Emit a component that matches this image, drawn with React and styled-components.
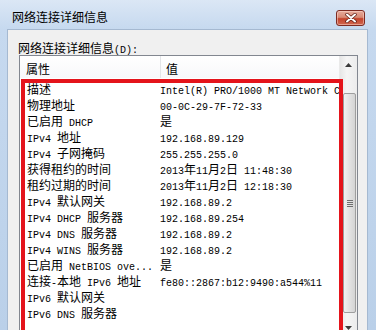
import styled, { createGlobalStyle } from 'styled-components'

const GlobalStyle = createGlobalStyle`
  html, body { margin: 0; padding: 0; }
  body {
    width: 376px;
    height: 330px;
    overflow: hidden;
    background: #bcd2ea;
    font-family: "Noto Sans CJK SC", sans-serif;
  }
`

const rows = [
  ['描述', 'Intel(R) PRO/1000 MT Network Connection'],
  ['物理地址', '00-0C-29-7F-72-33'],
  ['已启用 DHCP', '是'],
  ['IPv4 地址', '192.168.89.129'],
  ['IPv4 子网掩码', '255.255.255.0'],
  ['获得租约的时间', '2013年11月2日 11:48:30'],
  ['租约过期的时间', '2013年11月2日 12:18:30'],
  ['IPv4 默认网关', '192.168.89.2'],
  ['IPv4 DHCP 服务器', '192.168.89.254'],
  ['IPv4 DNS 服务器', '192.168.89.2'],
  ['IPv4 WINS 服务器', '192.168.89.2'],
  ['已启用 NetBIOS ove...', '是'],
  ['连接-本地 IPv6 地址', 'fe80::2867:b12:9490:a544%11'],
  ['IPv6 默认网关', ''],
  ['IPv6 DNS 服务器', ''],
]

// window chrome
const Window = styled.div`
  width: 376px;
  height: 330px;
  display: flex;
  flex-direction: column;
  background: linear-gradient(#dbe7f5 0px, #c6d9ef 29px, #bad0e9 100%);
  overflow: hidden;
`

const TitleBar = styled.div`
  height: 29px;
  box-sizing: border-box;
  padding: 5px 11px 0 12px;
  display: flex;
  align-items: center;
  justify-content: space-between;
  flex-shrink: 0;
`

const Title = styled.span`
  font-size: 12px;
  line-height: 14px;
  color: #000;
`

const CloseBtn = styled.div`
  width: 29px;
  height: 16px;
  margin-top: 1px;
  box-sizing: border-box;
  border: 1px solid #7d2b22;
  border-radius: 3px;
  background: linear-gradient(#e6ab9c 0%, #d88a75 45%, #c4432c 55%, #d0684f 100%);
  display: flex;
  align-items: center;
  justify-content: center;
  box-shadow: inset 0 0 0 1px rgba(255, 220, 210, 0.5);
`

const Panel = styled.div`
  flex: 1;
  margin: 0 8px 0 7px;
  background: #f0f0f0;
  border: 1px solid #a5b9d1;
  border-bottom: none;
  padding: 10px 9px 0 10px;
  overflow: hidden;
`

const FieldLabel = styled.div`
  font-size: 12px;
  line-height: 14px;
  height: 14px;
  color: #000;
`

const ListBox = styled.div`
  position: relative;
  margin-top: 1px;
  margin-left: 1px;
  height: 282px;
  box-sizing: border-box;
  border: 1px solid #828790;
  background: #fff;
  display: flex;
`

const ListMain = styled.div`
  flex: 1;
  min-width: 0;
  overflow: hidden;
  display: flex;
  flex-direction: column;
`

const Header = styled.div`
  height: 22px;
  flex-shrink: 0;
  display: flex;
  background: linear-gradient(#ffffff, #f7f8fa);
`

const HeadCell = styled.div`
  width: ${p => p.$width || 'auto'};
  flex: ${p => (p.$width ? 'none' : 1)};
  padding-left: ${p => p.$pad}px;
  padding-top: 3px;
  font-size: 12px;
  line-height: 19px;
  color: #000;
  border-right: ${p => (p.$sep ? '1px solid #e3e5e8' : 'none')};
`

const Rows = styled.div`
  padding-top: 1px;
`

const Row = styled.div`
  display: grid;
  grid-template-columns: 133px max-content;
  padding-left: 7px;
  height: 16px;
  line-height: 16px;
  white-space: nowrap;
  color: #000;
`

const Cell = styled.div`
  white-space: nowrap;
`

const Han = styled.span`
  font-family: "Noto Sans CJK SC", sans-serif;
  font-size: 12px;
  line-height: 16px;
`

const Lat = styled.span`
  font-family: "Liberation Mono", monospace;
  font-size: 10px;
  line-height: 16px;
  white-space: pre;
`

// scrollbar
const ScrollBar = styled.div`
  width: 17px;
  flex-shrink: 0;
  display: flex;
  flex-direction: column;
  background: linear-gradient(90deg, #e6e6e6, #f5f5f5 40%, #ececec);
  border-left: 1px solid #eaeaea;
`

const ArrowBtn = styled.div`
  height: 17px;
  display: flex;
  align-items: center;
  justify-content: center;
  flex-shrink: 0;
`

const Track = styled.div`
  flex: 1;
  padding-top: 20px;
`

const Thumb = styled.div`
  height: 220px;
  margin: 0 1px 0 3px;
  box-sizing: border-box;
  border: 1px solid #9e9e9e;
  border-radius: 2px;
  background: linear-gradient(90deg, #f2f2f2, #e2e2e2 50%, #d4d4d4);
  display: flex;
  flex-direction: column;
  align-items: center;
  justify-content: center;
  gap: 1px;
`

const Grip = styled.div`
  width: 6px;
  height: 1px;
  background: #6f6f6f;
`

// the red annotation box drawn over the rows
const Highlight = styled.div`
  position: absolute;
  left: 1px;
  top: 23px;
  width: 322px;
  height: 300px;
  box-sizing: border-box;
  border: 4px solid #e4141b;
  pointer-events: none;
`

const CJK = /([\u3000-\u9fff\uff00-\uffef]+)/

const Mixed = ({ text }) =>
  text
    .split(CJK)
    .filter(Boolean)
    .map((part, i) =>
      CJK.test(part) ? <Han key={i}>{part}</Han> : <Lat key={i}>{part}</Lat>
    )

const Arrow = ({ up }) => (
  <svg width="7" height="4" viewBox="0 0 7 4">
    <polygon points={up ? '3.5,0 7,4 0,4' : '0,0 7,0 3.5,4'} fill="#3a3a3a" />
  </svg>
)

export default function App() {
  return (
    <>
      <GlobalStyle />
      <Window>
        <TitleBar>
          <Title>网络连接详细信息</Title>
          <CloseBtn>
            <svg width="12" height="10" viewBox="0 0 12 10">
              <path d="M2 1.5 L10 8.5 M10 1.5 L2 8.5" stroke="#5a1a12" strokeWidth="3.4" strokeLinecap="round" />
              <path d="M2 1.5 L10 8.5 M10 1.5 L2 8.5" stroke="#fff" strokeWidth="2" strokeLinecap="round" />
            </svg>
          </CloseBtn>
        </TitleBar>
        <Panel>
          <FieldLabel>
            <Mixed text="网络连接详细信息(D):" />
          </FieldLabel>
          <ListBox>
            <ListMain>
              <Header>
                <HeadCell $width="134px" $pad={6} $sep>属性</HeadCell>
                <HeadCell $pad={5}>值</HeadCell>
              </Header>
              <Rows>
                {rows.map(([k, v]) => (
                  <Row key={k}>
                    <Cell><Mixed text={k} /></Cell>
                    <Cell><Mixed text={v} /></Cell>
                  </Row>
                ))}
              </Rows>
            </ListMain>
            <ScrollBar>
              <ArrowBtn><Arrow up /></ArrowBtn>
              <Track>
                <Thumb>
                  <Grip /><Grip /><Grip /><Grip />
                </Thumb>
              </Track>
              <ArrowBtn><Arrow /></ArrowBtn>
            </ScrollBar>
            <Highlight />
          </ListBox>
        </Panel>
      </Window>
    </>
  )
}
